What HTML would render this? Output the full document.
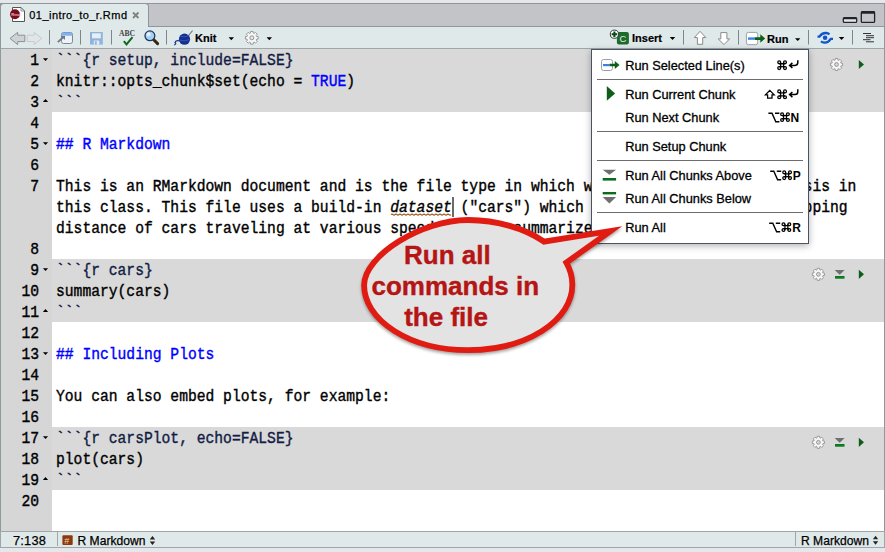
<!DOCTYPE html>
<html><head><meta charset="utf-8">
<style>
*{margin:0;padding:0;box-sizing:border-box}
html,body{width:885px;height:552px;overflow:hidden;background:#e5e7eb;position:relative;font-family:"Liberation Sans",sans-serif}
.a{position:absolute}
#tabstrip{left:0;top:3px;width:885px;height:24px;background:#c3c4c8;border-top:1px solid #8e979b;border-left:1px solid #8e979b;border-right:1px solid #8e979b;border-bottom:1px solid #8e979b}
#tab{left:0;top:3px;width:149px;height:25px;background:#e0e9ea;border:1px solid #8e979b;border-bottom:none;border-radius:4px 4px 0 0}
#toolbar{left:0;top:27px;width:885px;height:22px;background:#e0e9ea;border-bottom:1px solid #9ea6a9;border-right:1px solid #8e979b;border-left:1px solid #8e979b}
#editor{left:0;top:49px;width:885px;height:482px;background:#fff;border-right:1px solid #8f999c}
#gutter{left:0;top:49px;width:52px;height:482px;background:#d6d6d6;border-left:1px solid #8f999c}
.chunk{left:52px;width:832px;height:63px;background:#d9d9d9}
.row,.ln{position:absolute;height:21px;line-height:21px;font-family:"Liberation Mono",monospace;font-size:14.67px;color:#000;white-space:pre;transform:translateY(1.6px) scaleY(1.15);transform-origin:0 14.4px;-webkit-text-stroke:0.35px currentColor}
.row{left:56px}
.ln{left:0;width:39px;text-align:right}
.hd{color:#121c44}
.bl{color:#0000ff}
#status{left:0;top:531px;width:885px;height:17px;background:#e0e9ea;border:1px solid #9ea6a9}
#menu{left:591px;top:49px;width:218px;height:195px;background:#fff;border:1px solid #4b5262;box-shadow:0 2px 7px rgba(0,0,0,0.3)}
.mi{position:absolute;left:33.2px;font-size:12.8px;color:#000;-webkit-text-stroke:0.3px #000;white-space:pre;line-height:16px;height:16px}
.sep{position:absolute;left:5px;width:206px;height:1px;background:#6d6d6d}
.tb{position:absolute;font-size:11px;font-weight:bold;color:#000;line-height:14px;white-space:pre;-webkit-text-stroke:0.2px #000}
.st{position:absolute;font-size:12.1px;color:#000;line-height:14px;white-space:pre;-webkit-text-stroke:0.25px #000}
svg{position:absolute;left:0;top:0;overflow:visible}
</style></head><body>
<div id="tabstrip" class="a"></div>
<div id="tab" class="a"></div>
<div id="toolbar" class="a"></div>
<div id="editor" class="a"></div>
<div id="gutter" class="a"></div>
<div class="a chunk" style="top:49px"></div>
<div class="a chunk" style="top:259px"></div>
<div class="a chunk" style="top:427px"></div>

<div class="st" style="left:29.3px;top:8.2px;font-size:11px;letter-spacing:0.45px">01_intro_to_r.Rmd</div>
<div class="tb" style="left:195px;top:31px">Knit</div>
<div class="tb" style="left:632px;top:31px">Insert</div>
<div class="tb" style="left:767px;top:32px">Run</div>

<!-- line numbers -->
<div class="ln" style="top:49px">1</div>
<div class="ln" style="top:70px">2</div>
<div class="ln" style="top:91px">3</div>
<div class="ln" style="top:112px">4</div>
<div class="ln" style="top:133px">5</div>
<div class="ln" style="top:154px">6</div>
<div class="ln" style="top:175px">7</div>
<div class="ln" style="top:238px">8</div>
<div class="ln" style="top:259px">9</div>
<div class="ln" style="top:280px">10</div>
<div class="ln" style="top:301px">11</div>
<div class="ln" style="top:322px">12</div>
<div class="ln" style="top:343px">13</div>
<div class="ln" style="top:364px">14</div>
<div class="ln" style="top:385px">15</div>
<div class="ln" style="top:406px">16</div>
<div class="ln" style="top:427px">17</div>
<div class="ln" style="top:448px">18</div>
<div class="ln" style="top:469px">19</div>
<div class="ln" style="top:490px">20</div>

<!-- code rows -->
<div class="row hd" style="top:49px">```{r setup, include=FALSE}</div>
<div class="row" style="top:70px">knitr::opts_chunk$set(echo = <span class="bl">TRUE</span>)</div>
<div class="row hd" style="top:91px">```</div>
<div class="row bl" style="top:133px">## R Markdown</div>
<div class="row" style="top:175px">This is an RMarkdown document and is the file type in which we will do our data analysis in</div>
<div class="row" style="top:196px">this class. This file uses a build-in <i style="font-style:italic">dataset</i> ("cars") which lists the speeds and stopping</div>
<div class="row" style="top:217px">distance of cars traveling at various speeds. Now I summarize the data.</div>
<div class="row hd" style="top:259px">```{r cars}</div>
<div class="row" style="top:280px">summary(cars)</div>
<div class="row hd" style="top:301px">```</div>
<div class="row bl" style="top:343px">## Including Plots</div>
<div class="row" style="top:385px">You can also embed plots, for example:</div>
<div class="row hd" style="top:427px">```{r carsPlot, echo=FALSE}</div>
<div class="row" style="top:448px">plot(cars)</div>
<div class="row hd" style="top:469px">```</div>

<!-- cursor -->
<div class="a" style="left:452.2px;top:196.5px;width:1.5px;height:20px;background:#6a6a6a"></div>

<div id="status" class="a"></div>
<div class="st" style="left:13px;top:533.5px;font-size:12.8px;letter-spacing:0.2px">7:138</div>
<div class="st" style="left:77.5px;top:534px">R Markdown</div>
<div class="st" style="left:801px;top:534px">R Markdown</div>

<svg width="885" height="552" viewBox="0 0 885 552">
  <!-- tab icon -->
  <path d="M12.5 7.5 H21 L24.5 11 V21.5 H12.5 Z" fill="#fff" stroke="#555" stroke-width="1"/>
  <path d="M21 7.5 V11 H24.5" fill="none" stroke="#777" stroke-width="0.8"/>
  <circle cx="15" cy="14.2" r="5" fill="#7a0b1c"/>
  <text x="11.3" y="15.8" font-family="Liberation Sans" font-weight="bold" font-size="4.2" fill="#e8b8c0">Rmd</text>
  <!-- tab close -->
  <path d="M133 12.5 L138.5 18 M138.5 12.5 L133 18" stroke="#808080" stroke-width="1.8"/>
  <!-- window buttons -->
  <rect x="843.3" y="17.6" width="13.4" height="4.8" rx="1.2" fill="#e4e5e8" stroke="#1f2428" stroke-width="1.3"/>
  <rect x="843.3" y="17.3" width="13.4" height="2" rx="1" fill="#1f2428"/>
  <rect x="861.3" y="11.6" width="13.3" height="10.8" rx="1.2" fill="#c4c5c9" stroke="#1f2428" stroke-width="1.3"/>
  <rect x="861" y="11.2" width="14" height="2.6" rx="1" fill="#1f2428"/>
  <!-- separators -->
  <g fill="#7f8689">
    <rect x="49" y="30" width="1" height="14.5"/>
    <rect x="80" y="30" width="1" height="14.5"/>
    <rect x="111" y="30" width="1" height="14.5"/>
    <rect x="166" y="30" width="1" height="14.5"/>
    <rect x="683" y="30" width="1" height="14.5"/>
    <rect x="738" y="30" width="1" height="14.5"/>
    <rect x="808" y="30" width="1" height="14.5"/>
    <rect x="852" y="30" width="1" height="14.5"/>
  </g>
  <!-- back/forward -->
  <path d="M10 38.4 L17.7 32.3 V35.2 H24.8 V41.6 H17.7 V44.6 Z" fill="#cfd2d4" stroke="#8a9093" stroke-width="1"/>
  <path d="M41.8 38.4 L34.2 32.3 V35.2 H27.2 V41.6 H34.2 V44.6 Z" fill="#e1e5e7" stroke="#c6cbcd" stroke-width="1"/>
  <!-- window icon -->
  <rect x="61.5" y="32.5" width="11" height="11" rx="2" fill="#eef1f8" stroke="#7b8896" stroke-width="1"/>
  <path d="M61.5 35.8 V34.5 a2 2 0 0 1 2 -2 H70.5 a2 2 0 0 1 2 2 V35.8 Z" fill="#7fb2ee"/>
  <path d="M57.8 42.2 L63.5 37" stroke="#6f7a84" stroke-width="1.8"/>
  <path d="M61 36 H65 V40 Z" fill="#6f7a84"/>
  <!-- save -->
  <path d="M90 32 H102.8 V44.6 H90 Z" fill="#8fb5dd"/>
  <rect x="92" y="33.3" width="8.8" height="5" fill="#e8eef5"/>
  <rect x="93.8" y="40.6" width="5.5" height="4" fill="#e8eef5"/>
  <rect x="94.8" y="41.3" width="2" height="3.3" fill="#8fb5dd"/>
  <!-- ABC -->
  <text x="119" y="36" font-family="Liberation Serif" font-weight="bold" font-size="7.6" fill="#444">ABC</text>
  <path d="M123.8 41.2 L126.5 44.5 L132.5 37.2" fill="none" stroke="#0d6b1e" stroke-width="2"/>
  <!-- magnifier -->
  <path d="M153.5 39.5 L157.6 43.6" stroke="#3a2510" stroke-width="3" stroke-linecap="round"/>
  <circle cx="149.9" cy="35.8" r="4.9" fill="#a9cff5" stroke="#1d3a5c" stroke-width="1.3"/>
  <circle cx="148.6" cy="34.3" r="2" fill="#e6f2ff"/>
  <!-- knit yarn -->
  <path d="M185 40 L192.6 30.5" stroke="#777" stroke-width="1.2"/>
  <circle cx="184.5" cy="39.2" r="5.6" fill="#15308f"/>
  <path d="M180 36 Q184 38 189 35.5 M179.5 40 Q184 42 189.5 39.5" stroke="#3d5fc8" stroke-width="0.8" fill="none"/>
  <path d="M180 41 Q176 40 175 42.5 Q177 44 174 45" stroke="#15308f" stroke-width="1.2" fill="none"/>
  <!-- dropdown arrows -->
  <g fill="#000">
    <path d="M228.6 37.3 H234 L231.3 40.2 Z"/>
    <path d="M266.6 37.3 H272 L269.3 40.2 Z"/>
    <path d="M669.8 37.1 H675.2 L672.5 40 Z"/>
    <path d="M795 38.2 H800.4 L797.7 41.1 Z"/>
    <path d="M838.8 37.1 H844.3 L841.5 40.1 Z"/>
  </g>
  <!-- gear toolbar -->
  <g transform="translate(251.8 37.8)">
    <path id="gear" d="M-1.45 -4.68 L-1.29 -6.37 L1.29 -6.37 L1.45 -4.68 L2.29 -4.33 L3.59 -5.42 L5.42 -3.59 L4.33 -2.29 L4.68 -1.45 L6.37 -1.29 L6.37 1.29 L4.68 1.45 L4.33 2.29 L5.42 3.59 L3.59 5.42 L2.29 4.33 L1.45 4.68 L1.29 6.37 L-1.29 6.37 L-1.45 4.68 L-2.29 4.33 L-3.59 5.42 L-5.42 3.59 L-4.33 2.29 L-4.68 1.45 L-6.37 1.29 L-6.37 -1.29 L-4.68 -1.45 L-4.33 -2.29 L-5.42 -3.59 L-3.59 -5.42 L-2.29 -4.33 Z" fill="#f6f6f6" stroke="#8f8f8f" stroke-width="0.9"/>
    <circle r="2" fill="#e0e9ea" stroke="#8a8a8a" stroke-width="0.9"/>
  </g>
  <!-- insert -->
  <rect x="616.9" y="32.1" width="12" height="12.3" rx="2" fill="#1d6b2a"/>
  <text x="619.6" y="42.2" font-family="Liberation Sans" font-size="9.5" fill="#e0f0e2">C</text>
  <circle cx="614.4" cy="34.2" r="4.1" fill="#fff" stroke="#333" stroke-width="1"/>
  <path d="M614.4 31.4 V37 M611.6 34.2 H617.2" stroke="#0a4a12" stroke-width="2.1"/>
  <!-- up/down -->
  <path d="M700.1 31.3 L705.8 37.6 H702.7 V44.3 H697.4 V37.6 H694.3 Z" fill="#fff" stroke="#8a8a8a" stroke-width="1"/>
  <path d="M724 44.6 L729.6 38.9 H726.9 V32.6 H720.8 V38.9 H718.2 Z" fill="#fff" stroke="#8a8a8a" stroke-width="1"/>
  <!-- run icon -->
  <rect x="746.4" y="32.4" width="11.3" height="12.3" rx="2" fill="#fff" stroke="#9aa1a6" stroke-width="1"/>
  <rect x="748" y="37.4" width="7" height="2.4" fill="#3d7fe6"/>
  <path d="M755 37.2 H760.3 V34.2 L765.2 38.5 L760.3 42.7 V39.9 H755 Z" fill="#0d5e1a"/>
  <!-- publish icon -->
  <g stroke="#1155cc" stroke-width="2.3" fill="none">
    <path d="M817.5 36.6 H819.5 Q822 32.8 826 33 Q828 33.2 829.5 34.2"/>
    <path d="M833 38.9 H830.8 Q828.4 42.8 824.4 42.6 Q822.4 42.4 820.9 41.4"/>
  </g>
  <circle cx="825.1" cy="37.8" r="2.3" fill="#1155cc"/>
  <!-- outline icon -->
  <g fill="#333">
    <rect x="863" y="33" width="8" height="1"/>
    <rect x="866" y="35.2" width="8" height="1"/>
    <rect x="866" y="37.2" width="8" height="1"/>
    <rect x="863" y="39.2" width="7.5" height="1"/>
    <rect x="866" y="41.3" width="8" height="1"/>
  </g>
  <!-- fold arrows -->
  <g fill="#000">
    <path d="M42.9 58.2 H48.1 L45.5 61 Z"/>
    <path d="M42.9 102 H48.1 L45.5 99 Z"/>
    <path d="M42.9 142.2 H48.1 L45.5 145 Z"/>
    <path d="M42.9 268.2 H48.1 L45.5 271 Z"/>
    <path d="M42.9 312 H48.1 L45.5 309 Z"/>
    <path d="M42.9 352.2 H48.1 L45.5 355 Z"/>
    <path d="M42.9 436.2 H48.1 L45.5 439 Z"/>
    <path d="M42.9 480 H48.1 L45.5 477 Z"/>
  </g>
  <!-- chunk icons -->
  <g transform="translate(836.5 64.5) scale(0.95)"><use href="#gear"/><circle r="2" fill="#d9d9d9" stroke="#8a8a8a" stroke-width="0.9"/></g>
  <path d="M858.8 60 L864 64.5 L858.8 69 Z" fill="#0d5e1a"/>
  <g transform="translate(818.4 274.3) scale(0.95)"><use href="#gear"/><circle r="2" fill="#d9d9d9" stroke="#8a8a8a" stroke-width="0.9"/></g>
  <path d="M834.7 270 H844.6 L839.65 274.8 Z" fill="#6f6f6f"/>
  <rect x="835" y="276" width="9.5" height="2.7" fill="#0d7a1e"/>
  <path d="M858.8 269.7 L864 274.3 L858.8 279 Z" fill="#0d5e1a"/>
  <g transform="translate(818.4 442.3) scale(0.95)"><use href="#gear"/><circle r="2" fill="#d9d9d9" stroke="#8a8a8a" stroke-width="0.9"/></g>
  <path d="M834.7 438 H844.6 L839.65 442.8 Z" fill="#6f6f6f"/>
  <rect x="835" y="444" width="9.5" height="2.7" fill="#0d7a1e"/>
  <path d="M858.8 437.7 L864 442.3 L858.8 447 Z" fill="#0d5e1a"/>
  <!-- status icons -->
  <rect x="62.4" y="535.3" width="10.3" height="9.6" rx="1" fill="#8b3a0e"/>
  <text x="64.3" y="543.6" font-family="Liberation Sans" font-size="9" fill="#f0d0b0">#</text>
  <path d="M149.7 539.5 H155.2 L152.45 536 Z M149.7 541.5 H155.2 L152.45 545 Z" fill="#222"/>
  <path d="M872.9 539.3 H878.2 L875.55 535.8 Z M872.9 541.3 H878.2 L875.55 544.8 Z" fill="#222"/>
  <rect x="57" y="532" width="1" height="14" fill="#9ea6a9"/>
  <rect x="795" y="532" width="1" height="14" fill="#9ea6a9"/>
  <!-- squiggle -->
  <path d="M391 214.6 q1 -1.1 2 0 t2 0 t2 0 t2 0 t2 0 t2 0 t2 0 t2 0 t2 0 t2 0 t2 0 t2 0 t2 0 t2 0 t2 0 t2 0 t2 0 t2 0 t2 0 t2 0 t2 0 t2 0 t2 0 t2 0 t2 0 t2 0 t2 0 t2 0 t2 0 t2 0" fill="none" stroke="#9a5418" stroke-width="1.2"/>
</svg>

<div id="menu" class="a">
  <div class="sep" style="top:29px"></div>
  <div class="sep" style="top:81px"></div>
  <div class="sep" style="top:110px"></div>
  <div class="sep" style="top:162px"></div>
  <div class="mi" style="top:8px">Run Selected Line(s)</div>
  <div class="mi" style="top:37px">Run Current Chunk</div>
  <div class="mi" style="top:60px">Run Next Chunk</div>
  <div class="mi" style="top:89px">Run Setup Chunk</div>
  <div class="mi" style="top:118px">Run All Chunks Above</div>
  <div class="mi" style="top:141px">Run All Chunks Below</div>
  <div class="mi" style="top:170px">Run All</div>
</div>
<svg width="885" height="552" viewBox="0 0 885 552">
  <!-- menu icons -->
  <rect x="601.5" y="59.5" width="11" height="11" rx="2" fill="#fff" stroke="#9aa1a6" stroke-width="1"/>
  <rect x="603" y="64" width="6.5" height="2.2" fill="#3d7fe6"/>
  <path d="M609.5 63.8 H614.8 V61 L619.5 65 L614.8 69 V66.3 H609.5 Z" fill="#0d5e1a"/>
  <path d="M606.8 86 L615.1 93.4 L606.8 100.8 Z" fill="#0d5e1a"/>
  <path d="M602.7 169.7 H616.1 L609.4 174.8 Z" fill="#6f6f6f"/>
  <rect x="602.7" y="178" width="13.4" height="2.6" fill="#0d6b1e"/>
  <rect x="602.7" y="192" width="13.4" height="2.4" fill="#0d6b1e"/>
  <path d="M602.7 196.9 H616.1 L609.4 203.5 Z" fill="#6f6f6f"/>
  <!-- shortcuts -->
  <defs>
    <g id="cmd" fill="none" stroke="#000" stroke-width="1.25">
      <circle cx="-2.9" cy="-2.9" r="1.45"/><circle cx="2.9" cy="-2.9" r="1.45"/><circle cx="-2.9" cy="2.9" r="1.45"/><circle cx="2.9" cy="2.9" r="1.45"/>
      <path d="M-1.45 -2.9 V2.9 M1.45 -2.9 V2.9 M-2.9 -1.45 H2.9 M-2.9 1.45 H2.9"/>
    </g>
    <path id="ret" d="M797.8 60.2 V62.6 Q797.8 65.4 795 65.4 H790.6 M792.4 62.9 L789.6 65.4 L792.4 68" fill="none" stroke="#000" stroke-width="1.5"/>
    <path id="opt" d="M0 0 H3.6 L7.4 8.6 H11 M6.6 0 H11" fill="none" stroke="#000" stroke-width="1.4"/>
  </defs>
  <use href="#cmd" x="782.1" y="65.2"/>
  <use href="#ret"/>
  <use href="#cmd" x="782.1" y="94.3"/>
  <use href="#ret" y="29.1"/>
  <path d="M769.8 90.4 L774.2 94.8 H772 V98.2 H767.6 V94.8 H765.4 Z" fill="none" stroke="#000" stroke-width="1.25"/>
  <use href="#opt" x="768.4" y="113.2"/>
  <use href="#cmd" x="785" y="117.1"/>
  <use href="#opt" x="770.2" y="171.2"/>
  <use href="#cmd" x="787.1" y="175.2"/>
  <use href="#opt" x="769.2" y="223.2"/>
  <use href="#cmd" x="786.4" y="227.1"/>
  <g font-family="Liberation Sans" font-weight="bold" font-size="12" fill="#000">
    <text x="790.6" y="121.6">N</text>
    <text x="792.8" y="179.7">P</text>
    <text x="792.3" y="231.6">R</text>
  </g>
  <!-- bubble -->
  <path d="M 544 241.6 A 104.1 65.1 0 0 0 468.2 220 C 421.4 220, 364.1 255.8, 364.1 285.1 A 104.1 65.1 0 0 0 468.2 350.2 A 104.1 65.1 0 0 0 572.3 285.1 A 104.1 65.1 0 0 0 566.3 262.6 L 610.5 231 Z" fill="#e3e3e3" stroke="#e01b12" stroke-width="5.8" stroke-miterlimit="12" style="filter:drop-shadow(0 2px 1.5px rgba(0,0,0,0.35))"/>
  <g font-family="Liberation Sans" font-weight="bold" font-size="26" fill="#b51515" stroke="#b51515" stroke-width="0.4">
    <text x="404" y="263.5">Run all</text>
    <text x="371.5" y="295">commands in</text>
    <text x="404.2" y="326">the file</text>
  </g>
</svg>
</body></html>
